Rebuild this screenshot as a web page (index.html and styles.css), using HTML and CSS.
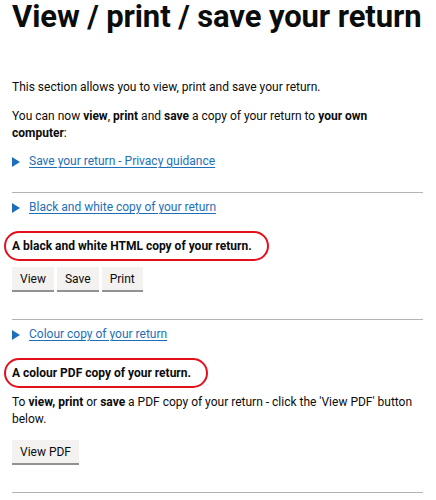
FILE: index.html
```html
<!DOCTYPE html>
<html lang="en">
<head>
    <meta charset="UTF-8">
    <meta name="viewport" content="width=device-width, initial-scale=1.0">
    <title>View / print / save your return</title>
    <link rel="stylesheet" href="styles.css">
</head>
<body>
    <main class="page">
        <h1 class="title">View / print / save your return</h1>

        <p class="body">This section allows you to view, print and save your return.</p>
        <p class="body">You can now <b>view</b>, <b>print</b> and <b>save</b> a copy of your return to <b>your own computer</b>:</p>

        <div class="details details-intro">
            <span class="marker"></span>
            <a href="#" class="link">Save your return - Privacy guidance</a>
        </div>

        <hr class="rule">

        <div class="details">
            <span class="marker"></span>
            <a href="#" class="link">Black and white copy of your return</a>
        </div>

        <h2 class="callout">A black and white HTML copy of your return.</h2>

        <div class="buttons">
            <button class="btn">View</button>
            <button class="btn">Save</button>
            <button class="btn">Print</button>
        </div>

        <hr class="rule">

        <div class="details">
            <span class="marker"></span>
            <a href="#" class="link">Colour copy of your return</a>
        </div>

        <h2 class="callout">A colour PDF copy of your return.</h2>

        <p class="body">To <b>view, print</b> or <b>save</b> a PDF copy of your return - click the 'View PDF' button below.</p>

        <div class="buttons">
            <button class="btn">View PDF</button>
        </div>

        <hr class="rule">
    </main>
</body>
</html>
```

FILE: styles.css
```css
body {
    margin: 0;
    padding: 0;
    font-family: Roboto, "Liberation Sans", Arial, sans-serif;
    color: #0b0c0c;
    background: #fff;
}

.page {
    padding: 0 12px;
}

.title {
    margin: 0 0 45px;
    font-size: 31px;
    line-height: 34px;
    font-weight: 700;
    letter-spacing: -0.1px;
    white-space: nowrap;
}

.body {
    margin: 0 0 12px;
    font-size: 12px;
    line-height: 17px;
}

.body b {
    font-weight: 700;
}

.details {
    display: flex;
    align-items: center;
    gap: 9px;
    font-size: 12px;
    line-height: 17px;
}

.details-intro {
    margin-top: -1px;
    margin-bottom: 22px;
}

.marker {
    width: 0;
    height: 0;
    border-style: solid;
    border-width: 5px 0 5px 8px;
    border-color: transparent transparent transparent #1d70b8;
}

.link {
    color: #1d70b8;
    text-decoration: underline;
    text-underline-offset: 2px;
}

.rule {
    margin: 0 1px 6px 0;
    border: 0;
    border-top: 1px solid #b1b4b6;
}

.callout {
    width: fit-content;
    margin: 15px 0 6px -8px;
    padding: 5px 15px 4px 6px;
    border: 2px solid #e3101b;
    border-radius: 15px;
    font-size: 12px;
    line-height: 17px;
    font-weight: 700;
}

.buttons {
    display: flex;
    gap: 3px;
    margin-bottom: 29px;
}

.btn {
    padding: 5px 8px 4px;
    border: 0;
    border-radius: 0;
    background: #f3f2f1;
    box-shadow: 0 2px 0 #929191;
    font-family: inherit;
    font-size: 12px;
    line-height: 14px;
    color: #0b0c0c;
}
```
